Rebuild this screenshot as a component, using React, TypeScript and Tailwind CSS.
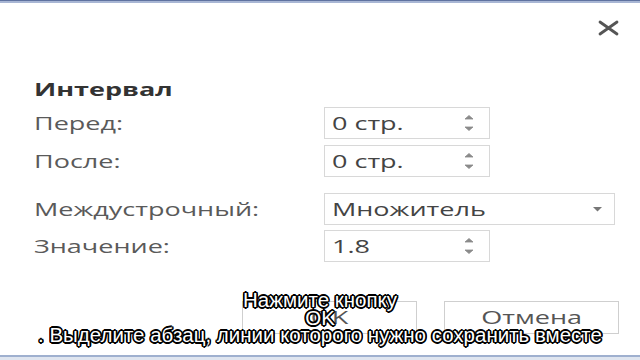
import React from "react";

const W = ({ children, center }: { children: React.ReactNode; center?: boolean }) => (
  <span className={`inline-block scale-x-[1.5] ${center ? "origin-center" : "origin-left"}`}>{children}</span>
);

const Spinner = () => (
  <svg width="10" height="22" viewBox="0 0 10 22" className="shrink-0">
    <path d="M1 7 L5 3.5 L9 7 Z" fill="#8a8a8a" stroke="#8a8a8a" strokeWidth="0.8" strokeLinejoin="round" />
    <path d="M1 15 L5 18.5 L9 15 Z" fill="#8a8a8a" stroke="#8a8a8a" strokeWidth="0.8" strokeLinejoin="round" />
  </svg>
);

const NumInput = ({ value }: { value: string }) => (
  <div className="w-[166px] h-full border border-[#d8d8d8] flex items-center justify-between pl-[7px] pr-[15px] text-[18px] text-[#444]">
    <W>{value}</W>
    <Spinner />
  </div>
);

const Row = ({ label, children, mt }: { label: string; children: React.ReactNode; mt: string }) => (
  <div className={`flex items-center h-[32px] ${mt}`}>
    <div className="w-[290px] text-[18px] text-[#5a5a5a]">
      <W>{label}</W>
    </div>
    {children}
  </div>
);

export default function App() {
  return (
    <div
      className="relative w-[640px] h-[360px] bg-white overflow-hidden flex flex-col"
      style={{ fontFamily: '"Open Sans", "Noto Sans", sans-serif' }}
    >
      <div className="h-[1px] bg-[#5f72a0]" />
      <div className="h-[2px] bg-[#a8b6d4]" />
      <div className="flex justify-end pr-[20px] pt-[17px]">
        <svg width="23" height="16" viewBox="0 0 23 16">
          <path d="M3 2 L20 14 M20 2 L3 14" stroke="#555" strokeWidth="2.8" strokeLinecap="round" />
        </svg>
      </div>
      <div className="flex flex-col pl-[34px]">
        <div className="mt-[41px] h-[24px] leading-[24px] text-[18px] font-bold text-[#333]">
          <W>Интервал</W>
        </div>
        <Row label="Перед:" mt="mt-[6px]">
          <NumInput value="0 стр." />
        </Row>
        <Row label="После:" mt="mt-[6px]">
          <NumInput value="0 стр." />
        </Row>
        <Row label="Междустрочный:" mt="mt-[16px]">
          <div className="w-[291px] h-full border border-[#d8d8d8] flex items-center justify-between pl-[7px] pr-[12px] text-[18px] text-[#444]">
            <W>Множитель</W>
            <svg width="9" height="5" viewBox="0 0 9 5">
              <path d="M0 0 L9 0 L4.5 4.5 Z" fill="#777" />
            </svg>
          </div>
        </Row>
        <Row label="Значение:" mt="mt-[5px]">
          <NumInput value="1.8" />
        </Row>
      </div>
      <div className="flex justify-end gap-[27px] pr-[21px] mt-[39px]">
        <div className="w-[175px] h-[33px] border border-[#cfcfcf] flex items-center justify-center text-[18px] text-[#555]">
          <W center>OK</W>
        </div>
        <div className="w-[175px] h-[33px] border border-[#cfcfcf] flex items-center justify-center text-[18px] text-[#555]">
          <W center>Отмена</W>
        </div>
      </div>
      <div className="absolute left-0 right-0 bottom-0 h-[5px] bg-[#dfe5ef]">
        <div className="h-[2px] bg-[#9fb0cf]" />
      </div>
      <div
        className="absolute left-0 right-0 top-[291px] text-center text-white text-[20.5px] leading-[17.5px] [text-shadow:-1.4px_-1.4px_0_#000,1.4px_-1.4px_0_#000,-1.4px_1.4px_0_#000,1.4px_1.4px_0_#000,0_1.6px_0_#000,0_-1.6px_0_#000,1.6px_0_0_#000,-1.6px_0_0_#000]"
        style={{ fontFamily: '"Liberation Sans", Arial, sans-serif' }}
      >
        <div>Нажмите кнопку</div>
        <div>OK</div>
        <div>. Выделите абзац, линии которого нужно сохранить вместе</div>
      </div>
    </div>
  );
}
